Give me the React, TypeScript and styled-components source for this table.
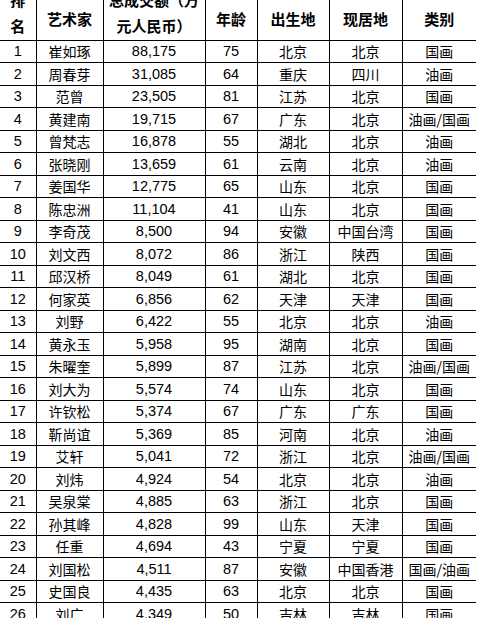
import React from "react";
import styled, { createGlobalStyle } from "styled-components";

const Global = createGlobalStyle`
  html, body { margin: 0; padding: 0; background: #fff; }
  body { font-family: "Liberation Sans", "Noto Sans CJK SC", sans-serif; color: #000; }
`;

const Page = styled.div`
  width: 486px;
  height: 630px;
  background: #fff;
`;

const Clip = styled.div`
  width: 486px;
  height: 618px;
  overflow: hidden;
`;

const Table = styled.table`
  margin-top: -13px;
  width: 476px;
  border-collapse: collapse;
  table-layout: fixed;
`;

const HeadRow = styled.tr`
  height: 53px;
`;

const HeadCell = styled.th`
  padding: 0;
  font-family: "Noto Sans CJK SC", "Liberation Sans", sans-serif;
  font-weight: 700;
  font-size: 15px;
  line-height: 26px;
  text-align: center;
  vertical-align: middle;
  white-space: nowrap;
  border-bottom: 1px solid #000;
  border-left: 1px solid #000;
  &:first-child { border-left: none; }
`;

const SingleLabel = styled.div`
  padding-top: 12px;
`;

const Row = styled.tr`
  height: 22.5px;
`;

const Cell = styled.td<{ $cjk?: boolean }>`
  padding: 0;
  font-family: ${(p) =>
    p.$cjk
      ? `"Noto Sans CJK SC", "Liberation Sans", sans-serif`
      : `"Liberation Sans", "Noto Sans CJK SC", sans-serif`};
  font-size: ${(p) => (p.$cjk ? "14px" : "14.5px")};
  line-height: 18px;
  text-align: center;
  vertical-align: middle;
  white-space: nowrap;
  border-bottom: 1px solid #000;
  border-left: 1px solid #000;
  &:first-child { border-left: none; }
`;

const widths = [36, 67, 102, 52, 72, 73, 74];

const data: [string, string, string, string, string, string][] = [
  ["崔如琢", "88,175", "75", "北京", "北京", "国画"],
  ["周春芽", "31,085", "64", "重庆", "四川", "油画"],
  ["范曾", "23,505", "81", "江苏", "北京", "国画"],
  ["黄建南", "19,715", "67", "广东", "北京", "油画/国画"],
  ["曾梵志", "16,878", "55", "湖北", "北京", "油画"],
  ["张晓刚", "13,659", "61", "云南", "北京", "油画"],
  ["姜国华", "12,775", "65", "山东", "北京", "国画"],
  ["陈忠洲", "11,104", "41", "山东", "北京", "国画"],
  ["李奇茂", "8,500", "94", "安徽", "中国台湾", "国画"],
  ["刘文西", "8,072", "86", "浙江", "陕西", "国画"],
  ["邱汉桥", "8,049", "61", "湖北", "北京", "国画"],
  ["何家英", "6,856", "62", "天津", "天津", "国画"],
  ["刘野", "6,422", "55", "北京", "北京", "油画"],
  ["黄永玉", "5,958", "95", "湖南", "北京", "国画"],
  ["朱曜奎", "5,899", "87", "江苏", "北京", "油画/国画"],
  ["刘大为", "5,574", "74", "山东", "北京", "国画"],
  ["许钦松", "5,374", "67", "广东", "广东", "国画"],
  ["靳尚谊", "5,369", "85", "河南", "北京", "油画"],
  ["艾轩", "5,041", "72", "浙江", "北京", "油画/国画"],
  ["刘炜", "4,924", "54", "北京", "北京", "油画"],
  ["吴泉棠", "4,885", "63", "浙江", "北京", "国画"],
  ["孙其峰", "4,828", "99", "山东", "天津", "国画"],
  ["任重", "4,694", "43", "宁夏", "宁夏", "国画"],
  ["刘国松", "4,511", "87", "安徽", "中国香港", "国画/油画"],
  ["史国良", "4,435", "63", "北京", "北京", "国画"],
  ["刘广", "4,349", "50", "吉林", "吉林", "国画"],
];

const singles = ["年龄", "出生地", "现居地", "类别"];

export default function App() {
  return (
    <Page>
      <Global />
      <Clip>
        <Table>
          <colgroup>
            {widths.map((w, i) => (
              <col key={i} style={{ width: w }} />
            ))}
          </colgroup>
          <thead>
            <HeadRow>
              <HeadCell>
                排<br />名
              </HeadCell>
              <HeadCell>
                <SingleLabel>艺术家</SingleLabel>
              </HeadCell>
              <HeadCell>
                总成交额（万<br />元人民币）
              </HeadCell>
              {singles.map((s) => (
                <HeadCell key={s}>
                  <SingleLabel>{s}</SingleLabel>
                </HeadCell>
              ))}
            </HeadRow>
          </thead>
          <tbody>
            {data.map((r, i) => (
              <Row key={i}>
                <Cell>{i + 1}</Cell>
                <Cell $cjk>{r[0]}</Cell>
                <Cell>{r[1]}</Cell>
                <Cell>{r[2]}</Cell>
                <Cell $cjk>{r[3]}</Cell>
                <Cell $cjk>{r[4]}</Cell>
                <Cell $cjk>{r[5]}</Cell>
              </Row>
            ))}
          </tbody>
        </Table>
      </Clip>
    </Page>
  );
}
